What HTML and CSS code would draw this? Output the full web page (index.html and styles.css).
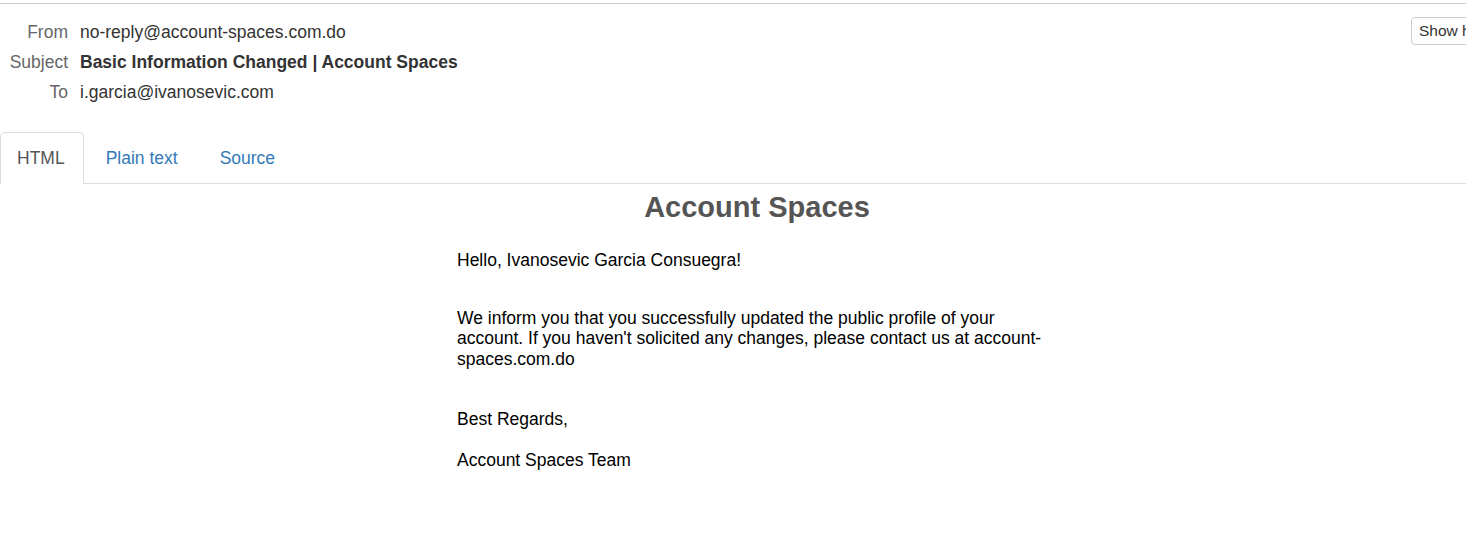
FILE: index.html
```html
<!DOCTYPE html>
<html>
<head>
<meta charset="utf-8">
<link rel="stylesheet" href="styles.css">
</head>
<body>
<div class="page">
  <div class="topline"></div>
  <div class="head">
    <div class="fields">
      <div class="row"><span class="label">From</span><span class="value">no-reply@account-spaces.com.do</span></div>
      <div class="row"><span class="label">Subject</span><span class="value subject">Basic Information Changed | Account Spaces</span></div>
      <div class="row"><span class="label">To</span><span class="value">i.garcia@ivanosevic.com</span></div>
    </div>
    <button class="show-btn">Show headers</button>
  </div>
  <ul class="tabs">
    <li class="tab active">HTML</li>
    <li class="tab">Plain text</li>
    <li class="tab">Source</li>
  </ul>
  <div class="mail">
    <h1 class="brand">Account Spaces</h1>
    <div class="content">
      <p class="hello">Hello, Ivanosevic Garcia Consuegra!</p>
      <p class="msg">We inform you that you successfully updated the public profile of your account. If you haven't solicited any changes, please contact us at account-spaces.com.do</p>
      <p class="regards">Best Regards,</p>
      <p class="team">Account Spaces Team</p>
    </div>
  </div>
</div>
</body>
</html>
```

FILE: styles.css
```css
html, body {
  margin: 0;
  padding: 0;
  background: #fff;
  overflow: hidden;
}
.page {
  width: 1514px;
  font-family: "Liberation Sans", Arial, sans-serif;
  color: #333;
}
.topline {
  margin-top: 3px;
  border-top: 1px solid #ccc;
}
.head {
  display: flex;
  align-items: flex-start;
  padding-top: 13px;
}
.fields {
  display: flex;
  flex-direction: column;
}
.row {
  display: grid;
  grid-template-columns: 68px auto;
  column-gap: 12px;
  font-size: 17.5px;
  line-height: 30px;
}
.label {
  text-align: right;
  color: #666;
}
.value {
  color: #333;
}
.subject {
  font-weight: bold;
}
.show-btn {
  margin-left: auto;
  margin-right: -7px;
  margin-top: 0;
  height: 28px;
  padding: 0 7px;
  font-family: "Liberation Sans", Arial, sans-serif;
  font-size: 15.5px;
  color: #333;
  background: #fff;
  border: 1px solid #ccc;
  border-radius: 4px;
  width: 110px;
  text-align: left;
  white-space: nowrap;
}
.tabs {
  list-style: none;
  margin: 25px 48px 0 0;
  padding: 0;
  display: flex;
  border-bottom: 1px solid #ddd;
}
.tab {
  font-size: 17.5px;
  line-height: 24px;
  padding: 13px 19px 13px 19px;
  margin-bottom: -1px;
  margin-right: 2px;
  color: #337ab7;
  border: 1px solid transparent;
  border-radius: 5px 5px 0 0;
}
.tab.active {
  color: #555;
  border-color: #ddd;
  border-bottom-color: #fff;
  padding-left: 16px;
  padding-right: 18px;
}
.mail {
  color: #000;
}
.brand {
  margin: 6px 0 0 0;
  text-align: center;
  font-size: 29px;
  line-height: 34px;
  font-weight: bold;
  color: #555;
}
.content {
  width: 600px;
  margin: 0 auto;
  font-size: 17.5px;
  line-height: 20.5px;
}
.content p {
  margin: 0;
}
.hello {
  padding-top: 26px;
}
.msg {
  padding-top: 37px;
}
.regards {
  padding-top: 40px;
}
.team {
  padding-top: 20.5px;
}
```
